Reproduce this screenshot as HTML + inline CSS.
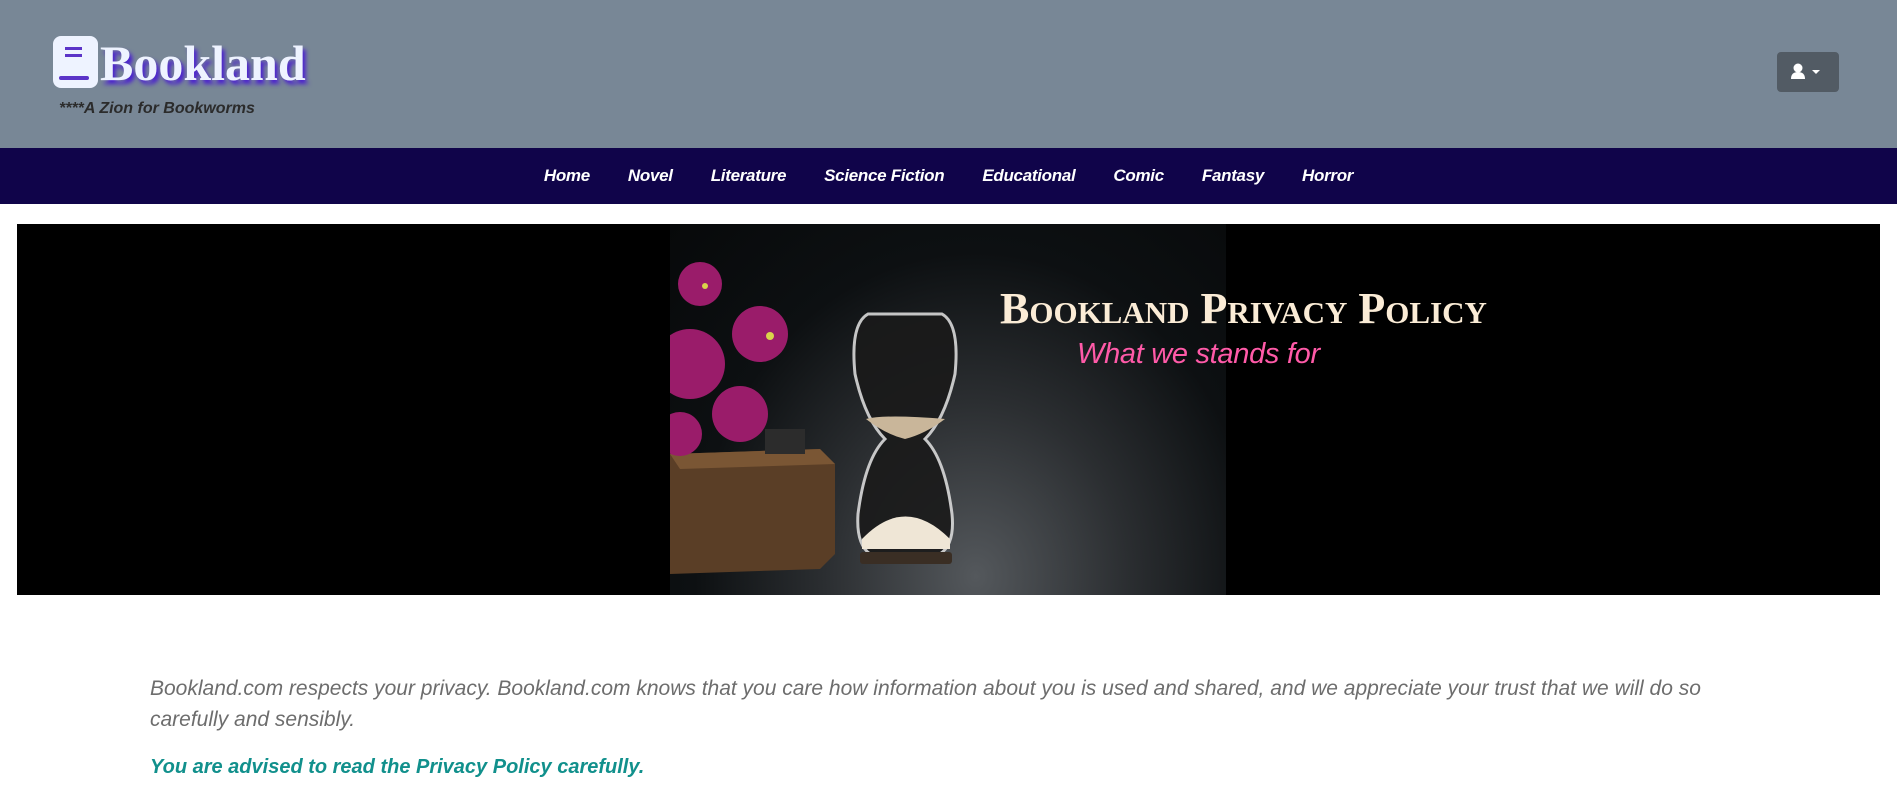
<!DOCTYPE html>
<html><head><meta charset="utf-8"><style>
*{margin:0;padding:0;box-sizing:border-box}
body{width:1897px;height:808px;overflow:hidden;background:#fff;font-family:"Liberation Sans",sans-serif}
.hdr{position:absolute;left:0;top:0;width:1897px;height:148px;background:#788796}
.logo{position:absolute;left:100px;top:34px;font-family:"Liberation Serif",serif;font-weight:bold;font-size:50px;color:#eef3ff;text-shadow:3px 4px 4px #4a1fd0}
.tag{position:absolute;left:59px;top:100px;font-style:italic;font-weight:bold;font-size:16px;color:#2b2b2b}
.btn{position:absolute;left:1777px;top:52px;width:62px;height:40px;background:#525b64;border-radius:4px}
nav{position:absolute;top:148px;left:0;width:1897px;height:56px;background:#10044a;display:flex;justify-content:center;align-items:center;gap:0}
nav a{color:#fff;font-style:italic;font-weight:bold;font-size:17px;margin:0 19px;letter-spacing:-0.3px}
.ban{position:absolute;left:17px;top:224px;width:1863px;height:371px;background:#000}
.img{position:absolute;left:670px;top:224px;width:556px;height:371px;overflow:hidden;background:radial-gradient(ellipse at 55% 95%,#54585c 0%,#2b2e31 35%,#0d1012 65%,#07090a 100%)}
.t1{position:absolute;left:1000px;top:283px;font-family:"Liberation Serif",serif;font-weight:bold;font-size:44px;font-variant:small-caps;color:#fbecd6;white-space:nowrap}
.t2{position:absolute;left:1077px;top:338px;font-style:italic;font-size:29px;color:#ff5aa8;white-space:nowrap;letter-spacing:-0.3px}
p.a{position:absolute;left:150px;top:673px;width:1650px;font-style:italic;font-size:21px;line-height:31px;color:#6d6d6d;letter-spacing:0px}
p.b{position:absolute;left:150px;top:756px;font-style:italic;font-weight:bold;font-size:20px;color:#11908c}
</style></head><body>
<div class="hdr">
<svg style="position:absolute;left:53px;top:36px" width="46" height="52" viewBox="0 0 46 52"><rect x="0" y="0" width="45" height="52" rx="8" fill="#eef3ff"/><rect x="12" y="11" width="17" height="3" fill="#5b34c8"/><rect x="12" y="18" width="17" height="3" fill="#5b34c8"/><rect x="6" y="40" width="30" height="4" rx="2" fill="#5b34c8"/></svg>
<div class="logo">Bookland</div>
<div class="tag">****A Zion for Bookworms</div>
<div class="btn"><svg width="62" height="40" viewBox="0 0 62 40"><circle cx="21" cy="16" r="4.5" fill="#fff"/><path d="M14 27q0-7 7-7t7 7z" fill="#fff"/><path d="M35 18h8l-4 4z" fill="#fff"/></svg></div>
</div>
<nav><a>Home</a><a>Novel</a><a>Literature</a><a>Science Fiction</a><a>Educational</a><a>Comic</a><a>Fantasy</a><a>Horror</a></nav>
<div class="ban"></div>
<div class="img"><svg width="556" height="371" viewBox="0 0 556 371">
<path d="M0 230 L150 225 L165 240 L165 330 L150 345 L0 350z" fill="#5a3e26"/>
<path d="M0 230 L150 225 L165 240 L10 245z" fill="#7a5634"/>
<rect x="95" y="205" width="40" height="25" fill="#2c2c2c"/>
<g fill="#9a1c6a"><circle cx="30" cy="60" r="22"/><circle cx="90" cy="110" r="28"/><circle cx="20" cy="140" r="35"/><circle cx="70" cy="190" r="28"/><circle cx="10" cy="210" r="22"/></g>
<g fill="#d9d44a"><circle cx="100" cy="112" r="4"/><circle cx="35" cy="62" r="3"/></g>
<path d="M198 90 Q180 100 185 150 Q195 195 215 215 Q195 235 188 290 Q186 320 200 330 L270 330 Q285 320 282 290 Q275 235 255 215 Q275 195 285 150 Q290 100 272 90z" fill="#1a1a1a" stroke="#d8d8d8" stroke-width="3" opacity="0.9"/>
<path d="M196 195 Q215 190 275 195 Q255 210 235 215 Q215 210 196 195z" fill="#c9b69a"/>
<path d="M192 315 Q235 270 280 315 L280 325 L192 325z" fill="#efe6d6"/>
<rect x="190" y="328" width="92" height="12" rx="3" fill="#3a2e24"/>
</svg></div>
<div class="t1">Bookland Privacy Policy</div>
<div class="t2">What we stands for</div>
<p class="a">Bookland.com respects your privacy. Bookland.com knows that you care how information about you is used and shared, and we appreciate your trust that we will do so<br>carefully and sensibly.</p>
<p class="b">You are advised to read the Privacy Policy carefully.</p>
</body></html>
